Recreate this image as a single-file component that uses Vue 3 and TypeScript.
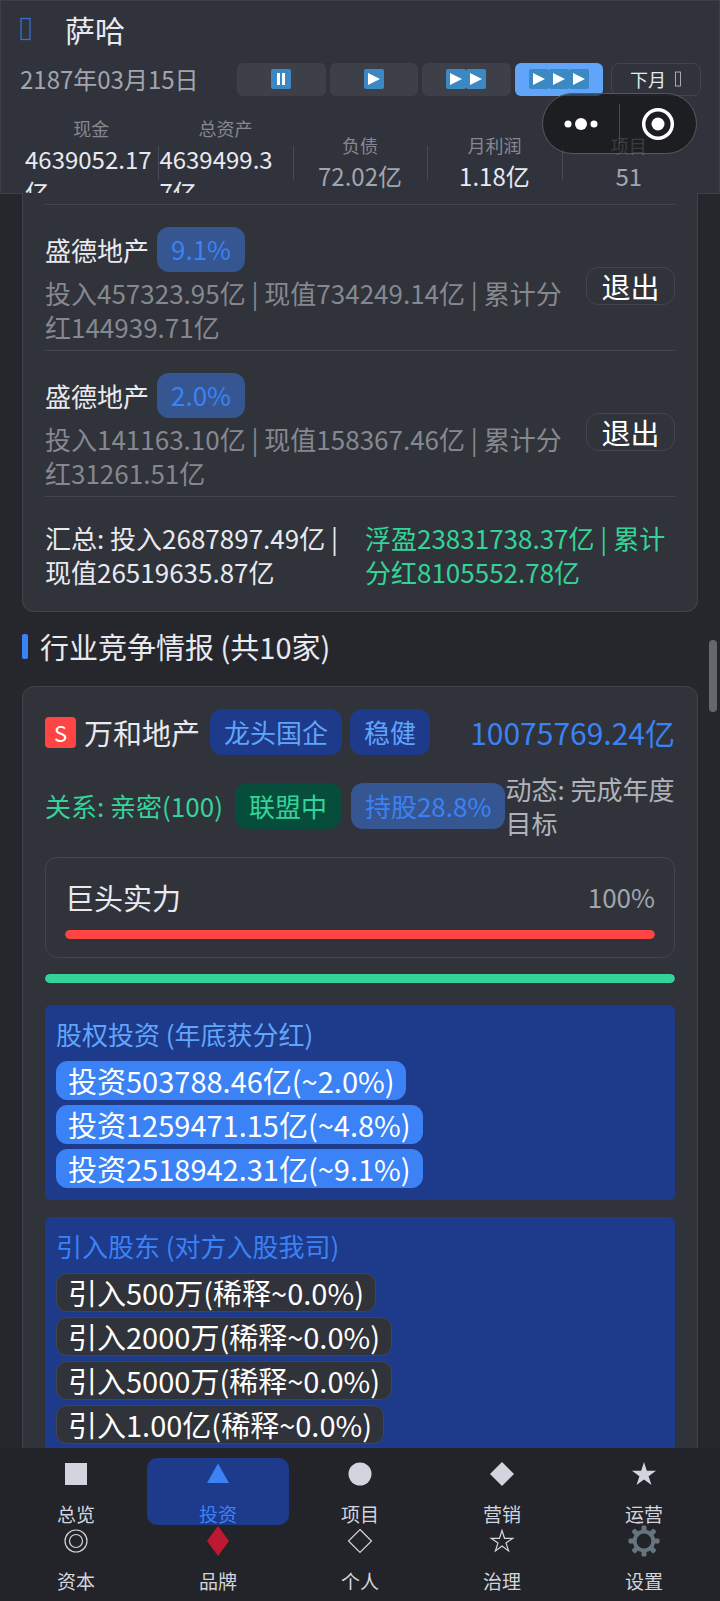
<script setup lang="ts">
interface Stat {
  label: string
  lines: string[]
  tone: 'bright' | 'muted'
}
interface Holding {
  name: string
  share: string
  detail: string
}
interface NavItem {
  label: string
  icon: string
}

const speeds = [
  { name: '暂停', arrows: 0 },
  { name: '一倍速', arrows: 1 },
  { name: '二倍速', arrows: 2 },
  { name: '三倍速', arrows: 3 },
]
const activeSpeed = 3

const stats: Stat[] = [
  { label: '现金', lines: ['4639052.17', '亿'], tone: 'bright' },
  { label: '总资产', lines: ['4639499.3', '7亿'], tone: 'bright' },
  { label: '负债', lines: ['72.02亿'], tone: 'muted' },
  { label: '月利润', lines: ['1.18亿'], tone: 'bright' },
  { label: '项目', lines: ['51'], tone: 'muted' },
]

const holdings: Holding[] = [
  { name: '盛德地产', share: '9.1%', detail: '投入457323.95亿 | 现值734249.14亿 | 累计分红144939.71亿' },
  { name: '盛德地产', share: '2.0%', detail: '投入141163.10亿 | 现值158367.46亿 | 累计分红31261.51亿' },
]

const invest = ['投资503788.46亿(~2.0%)', '投资1259471.15亿(~4.8%)', '投资2518942.31亿(~9.1%)']
const raise = ['引入500万(稀释~0.0%)', '引入2000万(稀释~0.0%)', '引入5000万(稀释~0.0%)', '引入1.00亿(稀释~0.0%)']

const power = 100
const relation = 100

const nav: NavItem[] = [
  { label: '总览', icon: 'square' },
  { label: '投资', icon: 'triangle' },
  { label: '项目', icon: 'circle' },
  { label: '营销', icon: 'diamond' },
  { label: '运营', icon: 'star' },
  { label: '资本', icon: 'rings' },
  { label: '品牌', icon: 'suit' },
  { label: '个人', icon: 'diamond-line' },
  { label: '治理', icon: 'star-line' },
  { label: '设置', icon: 'gear' },
]
const activeNav = 1
const teeth = [0, 45, 90, 135, 180, 225, 270, 315]
</script>

<template>
  <div class="app">
    <header class="top">
      <div class="title-row">
        <button class="back" aria-label="返回">
          <svg width="12" height="24" viewBox="0 0 12 24"><rect x="2" y="1.500" width="9" height="21" fill="none" stroke="#3b6fd0" stroke-width="1.300" /></svg>
        </button>
        <h1>萨哈</h1>
      </div>

      <div class="control-row">
        <time class="date" datetime="2187-03-15">2187年03月15日</time>
        <div class="controls">
          <button
            v-for="(s, i) in speeds"
            :key="s.name"
            class="speed"
            :class="{ active: i === activeSpeed }"
            :aria-label="s.name"
          >
            <svg v-if="s.arrows === 0" width="20" height="20" viewBox="0 0 20 20">
              <rect width="20" height="20" rx="2" fill="#3b88c3" />
              <path d="M6 4h3v12H6zM11 4h3v12h-3z" fill="#fff" />
            </svg>
            <svg v-for="n in s.arrows" v-else :key="n" width="20" height="20" viewBox="0 0 20 20">
              <rect width="20" height="20" rx="2" fill="#3b88c3" />
              <path d="M4 4l12 6-12 6z" fill="#fff" />
            </svg>
          </button>
          <button class="next">
            下月
            <svg width="7" height="16" viewBox="0 0 7 16"><rect x="0.500" y="1" width="5" height="14" fill="none" stroke="#c4c7ce" stroke-width="0.800" /></svg>
          </button>
        </div>
      </div>

      <dl class="stats">
        <div v-for="s in stats" :key="s.label" class="stat">
          <dt>{{ s.label }}</dt>
          <dd :class="[s.tone, { wrapped: s.lines.length > 1 }]">
            <span v-for="l in s.lines" :key="l">{{ l }}</span>
          </dd>
        </div>
      </dl>
    </header>

    <div class="capsule">
      <button aria-label="更多">
        <svg width="34" height="34" viewBox="0 0 34 34" fill="#fff"><circle cx="4" cy="17" r="3.500" /><circle cx="17" cy="17" r="6" /><circle cx="30" cy="17" r="3.500" /></svg>
      </button>
      <span class="capsule-line"></span>
      <button aria-label="关闭">
        <svg width="34" height="34" viewBox="0 0 34 34"><circle cx="17" cy="17" r="14.300" fill="none" stroke="#fff" stroke-width="3.500" /><circle cx="17" cy="17" r="6.500" fill="#fff" /></svg>
      </button>
    </div>

    <main class="body">
      <div class="content">
        <section class="card continued">
          <div v-for="h in holdings" :key="h.share" class="holding">
            <div class="holding-text">
              <div class="holding-name">
                <span>{{ h.name }}</span>
                <span class="tag share">{{ h.share }}</span>
              </div>
              <p>{{ h.detail }}</p>
            </div>
            <button class="exit">退出</button>
          </div>
          <div class="summary">
            <p>汇总: 投入2687897.49亿 | 现值26519635.87亿</p>
            <p class="gain">浮盈23831738.37亿 | 累计分红8105552.78亿</p>
          </div>
        </section>

        <h2>行业竞争情报 (共10家)</h2>

        <section class="card rival">
          <div class="rival-head">
            <span class="grade">S</span>
            <h3>万和地产</h3>
            <div class="types">
              <span class="tag type">龙头国企</span>
              <span class="tag type">稳健</span>
            </div>
            <span class="worth">10075769.24亿</span>
          </div>
          <div class="rival-state">
            <span class="relation">关系: 亲密(100)</span>
            <div class="ties">
              <span class="tag ally">联盟中</span>
              <span class="tag share">持股28.8%</span>
            </div>
            <p>动态: 完成年度目标</p>
          </div>

          <div class="power">
            <div class="power-head">
              <span>巨头实力</span>
              <span class="percent">{{ power }}%</span>
            </div>
            <div class="bar"><div class="fill red" :style="{ width: power + '%' }"></div></div>
          </div>
          <div class="bar relation-bar"><div class="fill green" :style="{ width: relation + '%' }"></div></div>

          <div class="panel">
            <h4>股权投资 (年底获分红)</h4>
            <button v-for="t in invest" :key="t" class="action primary">{{ t }}</button>
          </div>
          <div class="panel">
            <h4 class="deep">引入股东 (对方入股我司)</h4>
            <button v-for="t in raise" :key="t" class="action">{{ t }}</button>
          </div>
        </section>
      </div>
      <span class="thumb"></span>
    </main>

    <nav class="tabs">
      <button v-for="(n, i) in nav" :key="n.label" class="tab" :class="{ active: i === activeNav }">
        <svg class="icon" width="32" height="32" viewBox="0 0 32 32" fill="currentColor">
          <rect v-if="n.icon === 'square'" x="5" y="5" width="22" height="22" />
          <path v-else-if="n.icon === 'triangle'" d="M16 5.500L27 25H5z" />
          <circle v-else-if="n.icon === 'circle'" cx="16" cy="16" r="11.500" />
          <path v-else-if="n.icon === 'diamond'" d="M16 4l12 12-12 12L4 16z" />
          <path v-else-if="n.icon === 'star'" d="M16 4l2.800 8.800H28l-7.400 5.400 2.900 8.800-7.500-5.400L8.500 27l2.900-8.800L4 12.800h9.200z" />
          <g v-else-if="n.icon === 'rings'" fill="none" stroke="currentColor" stroke-width="1.200">
            <circle cx="16" cy="16" r="11" />
            <circle cx="16" cy="16" r="6.500" />
          </g>
          <path v-else-if="n.icon === 'suit'" d="M16 1l11 15-11 15L5 16z" fill="#be1931" />
          <path v-else-if="n.icon === 'diamond-line'" d="M16 4.500L27.500 16 16 27.500 4.500 16z" fill="none" stroke="currentColor" stroke-width="1.200" />
          <path v-else-if="n.icon === 'star-line'" d="M16 5.500l2.500 7.800h8.300L20 18l2.600 7.900-6.600-4.800-6.600 4.800L12 18l-6.800-4.700h8.300z" fill="none" stroke="currentColor" stroke-width="1.200" />
          <g v-else fill="#66757f">
            <circle cx="16" cy="16" r="9.300" fill="none" stroke="#66757f" stroke-width="3.800" />
            <rect v-for="a in teeth" :key="a" x="13.500" y="0.500" width="5" height="6" rx="1.500" :transform="`rotate(${a} 16 16)`" />
          </g>
        </svg>
        <span>{{ n.label }}</span>
      </button>
    </nav>
  </div>
</template>

<style>
body {
  margin: 0;
  background: #26272c;
}
</style>

<style scoped>
* {
  box-sizing: border-box;
}
.app {
  position: relative;
  display: flex;
  flex-direction: column;
  height: 100vh;
  overflow: hidden;
  background: #26272c;
  color: #e8eaf0;
  font-family: "Noto Sans CJK SC", sans-serif;
  font-size: 26px;
  line-height: 34px;
}
button {
  margin: 0;
  padding: 0;
  border: 0;
  background: none;
  color: inherit;
  font-family: inherit;
  cursor: pointer;
}
h1, h2, h3, h4, p, dl, dd {
  margin: 0;
  font-weight: 400;
}
svg {
  display: block;
  flex: none;
}

.top {
  flex: none;
  height: 193px;
  overflow: hidden;
  padding: 8px 18px 0;
  border: 1px solid #3d4048;
  border-bottom: 0;
  background: #30333b;
}
.title-row {
  display: flex;
  align-items: center;
  gap: 34px;
  height: 40px;
}
h1 {
  font-size: 30px;
  line-height: 40px;
}
.control-row {
  display: flex;
  align-items: center;
  justify-content: space-between;
  margin-top: 13px;
}
.date {
  flex: none;
  width: 218px;
  padding-left: 1px;
  color: #a2a5ad;
  font-size: 24px;
}
.controls {
  display: flex;
  flex: 1;
  gap: 4px;
}
.speed {
  display: flex;
  flex: 1;
  align-items: center;
  justify-content: center;
  height: 33px;
  border-radius: 6px;
  background: #3d4048;
}
.speed.active {
  background: #60a5fa;
}
.next {
  display: flex;
  flex: none;
  align-items: center;
  justify-content: center;
  gap: 9px;
  width: 90px;
  height: 33px;
  margin-left: 4px;
  border: 1px solid #42454d;
  border-radius: 8px;
  font-size: 18px;
}
.stats {
  display: flex;
  align-items: center;
  margin: 19px 5px 0;
}
.stat {
  position: relative;
  flex: 1;
  min-width: 0;
}
.stat + .stat::before {
  content: "";
  position: absolute;
  top: 50%;
  left: 0;
  width: 1px;
  height: 34px;
  margin-top: -16px;
  background: #484b53;
}
dt {
  color: #85888f;
  font-size: 18px;
  line-height: 27px;
  text-align: center;
}
dd {
  font-size: 24px;
  line-height: 33px;
  text-align: center;
}
dd span {
  display: block;
}
dd.wrapped {
  padding-left: 1px;
  text-align: left;
}
dd.muted {
  color: #a2a5ad;
}

.capsule {
  position: absolute;
  z-index: 2;
  top: 93px;
  right: 23px;
  display: flex;
  align-items: center;
  width: 155px;
  height: 61px;
  border: 1px solid #57595d;
  border-radius: 31px;
  background: rgba(20, 20, 22, 0.65);
}
.capsule button {
  display: flex;
  flex: 1;
  justify-content: center;
}
.capsule-line {
  width: 1px;
  height: 40px;
  background: #4a4b4f;
}

.body {
  position: relative;
  flex: 1;
  min-height: 0;
  overflow: hidden;
}
.content {
  padding: 0 22px;
  border-top: 1px solid #3d4048;
}
.thumb {
  position: absolute;
  top: 447px;
  right: 3px;
  width: 8px;
  height: 72px;
  border-radius: 4px;
  background: #66676a;
}
.card {
  padding: 22px;
  border: 1px solid #42454d;
  border-radius: 12px;
  background: #30333a;
}
.continued {
  margin-top: -1px;
  padding-top: 11px;
  border-top: 0;
  border-radius: 0 0 12px 12px;
}
.holding {
  display: flex;
  align-items: center;
  gap: 10px;
  padding: 22px 0 6px;
  border-bottom: 1px solid #42454d;
}
.holding:first-child {
  border-top: 1px solid #42454d;
}
.holding-text {
  flex: 1;
}
.holding-text p {
  margin-top: 4px;
  color: #85888f;
}
.holding-name {
  display: flex;
  align-items: center;
  gap: 8px;
}
.tag {
  flex: none;
  padding: 6px 14px;
  border-radius: 12px;
  white-space: nowrap;
}
.holding-name .tag {
  padding: 5px 14px 6px;
}
.share {
  background: #355691;
  color: #3b82f6;
}
.type {
  background: #1e3a8a;
  color: #60a5fa;
}
.ally {
  background: #064e3b;
  color: #34d399;
}
.exit {
  flex: none;
  width: 89px;
  height: 38px;
  border: 1px solid #42454d;
  border-radius: 12px;
  color: #fff;
  font-size: 29px;
  line-height: 34px;
}
.summary {
  display: grid;
  grid-template-columns: 1fr 1fr;
  gap: 10px;
  padding-top: 24px;
}
.gain {
  color: #34d399;
}

h2 {
  display: flex;
  align-items: center;
  gap: 12px;
  margin: 14px 0 20px;
  font-size: 29px;
  line-height: 40px;
}
h2::before {
  content: "";
  width: 6px;
  height: 25px;
  border-radius: 2px;
  background: #3b82f6;
}

.rival-head {
  display: flex;
  align-items: center;
}
.grade {
  width: 31px;
  height: 31px;
  border-radius: 4px;
  background: #ff4444;
  color: #fff;
  font-size: 22px;
  line-height: 31px;
  text-align: center;
}
h3 {
  margin-left: 8px;
  font-size: 29px;
  line-height: 40px;
}
.types {
  display: flex;
  gap: 8px;
  margin-left: 10px;
}
.worth {
  margin-left: auto;
  color: #3b82f6;
  font-size: 30px;
}
.rival-state {
  display: flex;
  align-items: center;
  margin-top: 17px;
}
.relation {
  flex: none;
  color: #34d399;
}
.ties {
  display: flex;
  flex: none;
  gap: 10px;
  margin-left: 12px;
}
.rival-state p {
  flex: 1;
  color: #b0b3ba;
}
.power {
  margin-top: 17px;
  padding: 18px 19px;
  border: 1px solid #42454d;
  border-radius: 12px;
}
.power-head {
  display: flex;
  align-items: center;
  justify-content: space-between;
  margin-bottom: 12px;
  font-size: 29px;
  line-height: 42px;
}
.percent {
  color: #a2a5ad;
  font-size: 26px;
}
.bar {
  height: 9px;
  overflow: hidden;
  border-radius: 5px;
}
.fill {
  height: 100%;
  border-radius: 5px;
}
.red {
  background: #ff4444;
}
.green {
  background: #34d399;
}
.relation-bar {
  margin-top: 16px;
}
.panel {
  display: flex;
  flex-direction: column;
  align-items: flex-start;
  gap: 5px;
  margin-top: 17px;
  padding: 12px 11px;
  border-radius: 6px;
  background: #1e3a8a;
}
.relation-bar + .panel {
  margin-top: 22px;
}
h4 {
  margin-bottom: 6px;
  color: #60a5fa;
  font-size: 26px;
  line-height: 33px;
}
h4.deep {
  color: #3b82f6;
}
.action {
  height: 39px;
  padding: 0 11px;
  border: 1px solid #42454d;
  border-radius: 11px;
  background: #30333a;
  color: #fff;
  font-size: 29px;
  line-height: 35px;
  white-space: nowrap;
}
.action.primary {
  border-color: #3b82f6;
  background: #3b82f6;
}

.tabs {
  display: grid;
  flex: none;
  grid-template-columns: repeat(5, 1fr);
  padding: 10px 5px 9px;
  background: #232429;
}
.tab {
  display: flex;
  flex-direction: column;
  align-items: center;
  gap: 10px;
  height: 67px;
  border-radius: 10px;
  color: #d3d5de;
  font-size: 19px;
  line-height: 28px;
}
.tab.active {
  background: #1e3a8a;
  color: #3b82f6;
}
</style>
